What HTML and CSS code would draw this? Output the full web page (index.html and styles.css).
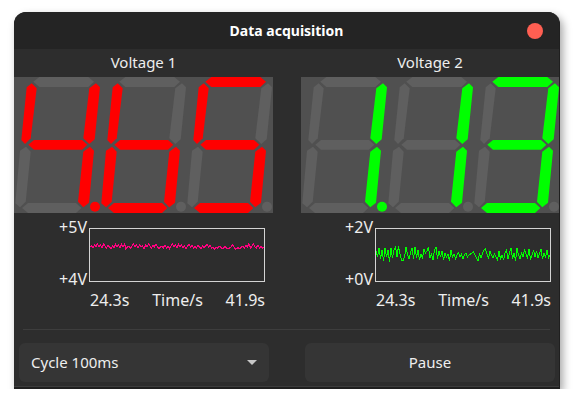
FILE: index.html
```html
<!DOCTYPE html>
<html>
  <head>
    <title>Data acquisition</title>
    <link rel="stylesheet" href="styles.css">
  </head>
  <body>
    <svg class="defs" width="0" height="0">
      <defs>
        <polygon id="segTop" points="19.3,4.7 25.3,0 74.3,0 80,4.7 74.3,10 25.3,10"/>
        <polygon id="segMid" points="14.3,67.8 20,63 68,63 73.3,67.8 68,72.7 20,72.7"/>
        <polygon id="segBot" points="8,131 14,126 62,126 67.3,131 62,136 14,136"/>
        <polygon id="segUL" points="17.7,6.3 22.7,11.3 16.7,61.3 11,67 7.3,63 12.7,10.3"/>
        <polygon id="segUR" points="82,6.3 86,10.3 80.7,62.3 75.3,67 69.3,61.3 75.3,11.3"/>
        <polygon id="segLL" points="12,69.7 16.7,74.7 11.7,124.7 6,130.3 1.3,126.3 6,73.7"/>
        <polygon id="segLR" points="76,69.7 80,73.7 75,125.7 69.3,130.3 64,124.7 69.3,74.7"/>
        <circle id="segDot" cx="81" cy="129.7" r="5"/>
      </defs>
    </svg>
    <div class="window">
      <div class="titlebar">
        <span></span>
        <div class="title">Data acquisition</div>
        <div class="close"></div>
      </div>
      <div class="meters">
        <div class="meter">
          <div class="meter-label">Voltage 1</div>
          <svg class="lcd red" width="259" height="136" viewBox="0 0 259 136">
            <g>
              <use href="#segTop"/><use href="#segBot"/><use href="#segLL"/>
              <use class="on" href="#segUL"/><use class="on" href="#segUR"/><use class="on" href="#segMid"/><use class="on" href="#segLR"/><use class="on" href="#segDot"/>
            </g>
            <g transform="translate(86 0)">
              <use href="#segTop"/><use href="#segUR"/><use href="#segDot"/>
              <use class="on" href="#segUL"/><use class="on" href="#segMid"/><use class="on" href="#segLL"/><use class="on" href="#segLR"/><use class="on" href="#segBot"/>
            </g>
            <g transform="translate(172 0)">
              <use href="#segUR"/><use href="#segLL"/><use href="#segDot"/>
              <use class="on" href="#segTop"/><use class="on" href="#segUL"/><use class="on" href="#segMid"/><use class="on" href="#segLR"/><use class="on" href="#segBot"/>
            </g>
          </svg>
          <div class="chart">
            <div class="y-labels"><span>+5V</span><span>+4V</span></div>
            <svg class="plot" width="174" height="52" viewBox="1 1 174 52">
              <polyline class="trace-red" points="1,19 2.5,18 4,20 5.5,17 7,19 8.5,16 10,19 11.5,17 13,20 14.5,16 16,18 17.5,20 19,17 20.5,19 22,21 23.5,18 25,20 26.5,16 28,19 29.5,17 31,20 32.5,16 34,19 35.5,16 37,21 38.5,19 40,18 41.5,20 43,18 44.5,16 46,19 47.5,17 49,20 50.5,17 52,19 53.5,18 55,21 56.5,17 58,19 59.5,16 61,18 62.5,20 64,17 65.5,19 67,16 68.5,19 70,21 71.5,19 73,18 74.5,20 76,17 77.5,20 79,18 80.5,21 82,18 83.5,16 85,19 86.5,17 88,20 89.5,16 91,19 92.5,17 94,20 95.5,18 97,21 98.5,18 100,16 101.5,19 103,17 104.5,20 106,18 107.5,20 109,17 110.5,19 112,21 113.5,18 115,20 116.5,18 118,16 119.5,19 121,17 122.5,20 124,19 125.5,21 127,19 128.5,20 130,18 131.5,19 133,21 134.5,20 136,18 137.5,20 139,21 140.5,20 142,19 143.5,17 145,19 146.5,21 148,20 149.5,20 151,21 152.5,19 154,18 155.5,20 157,17 158.5,19 160,16 161.5,20 163,18 164.5,16 166,19 167.5,20 169,17 170.5,20 172,18 173.5,20 175,19"/>
            </svg>
            <div class="x-labels"><span>24.3s</span><span>Time/s</span><span>41.9s</span></div>
          </div>
        </div>
        <div class="meter">
          <div class="meter-label">Voltage 2</div>
          <svg class="lcd green" width="259" height="136" viewBox="0 0 259 136">
            <g>
              <use href="#segTop"/><use href="#segBot"/><use href="#segUL"/><use href="#segLL"/><use href="#segMid"/>
              <use class="on" href="#segUR"/><use class="on" href="#segLR"/><use class="on" href="#segDot"/>
            </g>
            <g transform="translate(86 0)">
              <use href="#segTop"/><use href="#segBot"/><use href="#segUL"/><use href="#segLL"/><use href="#segMid"/><use href="#segDot"/>
              <use class="on" href="#segUR"/><use class="on" href="#segLR"/>
            </g>
            <g transform="translate(172 0)">
              <use href="#segUL"/><use href="#segLL"/><use href="#segDot"/>
              <use class="on" href="#segTop"/><use class="on" href="#segUR"/><use class="on" href="#segMid"/><use class="on" href="#segLR"/><use class="on" href="#segBot"/>
            </g>
          </svg>
          <div class="chart chart-right">
            <div class="y-labels"><span>+2V</span><span>+0V</span></div>
            <svg class="plot" width="174" height="52" viewBox="1 1 174 52">
              <polyline class="trace-green" points="1,23 2.5,29 4,20 5.5,31 7,22 8.5,33 10,20 11.5,29 13,22 14.5,34 16,20 17.5,30 19,22 20.5,19 22,29 23.5,18 25,26 26.5,32 28,33 29.5,29 31,19 32.5,26 34,31 35.5,25 37,20 38.5,31 40,19 41.5,30 43,22 44.5,32 46,26 47.5,30 49,21 50.5,25 52,23 53.5,19 55,30 56.5,26 58,32 59.5,22 61,19 62.5,31 64,23 65.5,29 67,23 68.5,32 70,25 71.5,29 73,26 74.5,33 76,22 77.5,29 79,26 80.5,31 82,27 83.5,25 85,29 86.5,26 88,31 89.5,27 91,25 92.5,29 94,27 95.5,26 97,25 98.5,24 100,27 101.5,30 103,33 104.5,26 106,30 107.5,25 109,22 110.5,21 112,26 113.5,31 115,23 116.5,27 118,30 119.5,26 121,29 122.5,32 124,23 125.5,31 127,27 128.5,32 130,25 131.5,22 133,31 134.5,25 136,20 137.5,31 139,25 140.5,33 142,20 143.5,27 145,31 146.5,25 148,29 149.5,22 151,26 152.5,30 154,21 155.5,32 157,27 158.5,22 160,29 161.5,23 163,30 164.5,26 166,21 167.5,31 169,25 170.5,29 172,22 173.5,30 175,27"/>
            </svg>
            <div class="x-labels"><span>24.3s</span><span>Time/s</span><span>41.9s</span></div>
          </div>
        </div>
      </div>
      <div class="separator"></div>
      <div class="controls">
        <div class="control dropdown">
          <span>Cycle 100ms</span>
          <span class="arrow"></span>
        </div>
        <div class="control button">Pause</div>
      </div>
    </div>
  </body>
</html>
```
FILE: styles.css
```css
body {
  margin: 0;
  background: #ffffff;
  font-family: "Noto Sans", sans-serif;
  color: #eeeeee;
}
.defs {
  display: block;
}
.window {
  width: 545px;
  height: 375px;
  margin: 12px 0 0 14px;
  background: #2d2d2d;
  border-right: 1px solid #1f1f1f;
  border-bottom: 2px solid #1f1f1f;
  border-radius: 12px 12px 0 0;
  box-shadow: 3px 4px 8px rgba(0, 0, 0, 0.35);
  overflow: hidden;
}
.titlebar {
  display: grid;
  grid-template-columns: 1fr auto 1fr;
  align-items: center;
  height: 37px;
  background: #242424;
}
.title {
  font-size: 14px;
  font-weight: bold;
  color: #ffffff;
}
.close {
  justify-self: end;
  width: 16px;
  height: 16px;
  margin-right: 16px;
  border-radius: 50%;
  background: #ff5f52;
}
.meters {
  display: grid;
  grid-template-columns: 259px 258px;
  column-gap: 28px;
}
.meter-label {
  height: 27px;
  padding-bottom: 1px;
  line-height: 27px;
  text-align: center;
  font-size: 15px;
}
.lcd {
  display: block;
  background: #505050;
}
.lcd use {
  fill: #5f5f5f;
}
.lcd.red use.on {
  fill: #ff0000;
}
.lcd.green use.on {
  fill: #00ff00;
}
.chart {
  display: grid;
  grid-template-columns: 75px 176px;
  margin-top: 15px;
  font-size: 16px;
}
.chart-right {
  margin-left: -1px;
}
.y-labels {
  display: flex;
  flex-direction: column;
  justify-content: space-between;
  height: 72px;
  margin: -11px 0 -7px;
  padding-right: 2px;
  line-height: 20px;
  text-align: right;
}
.plot {
  display: block;
  background: #2d2d2d;
  border: 1px solid #d4d4d4;
  shape-rendering: crispEdges;
}
.plot polyline {
  fill: none;
}
.trace-red {
  stroke: #ff0080;
  stroke-width: 1.3;
}
.trace-green {
  stroke: #00ff00;
  stroke-width: 1;
}
.x-labels {
  grid-column: 2;
  display: flex;
  justify-content: space-between;
  margin: 8px 0 0 1px;
  line-height: 20px;
}
.separator {
  height: 1px;
  margin: 19px 9px 0;
  background: #3d3d3d;
}
.controls {
  display: grid;
  grid-template-columns: 250px 250px;
  column-gap: 36px;
  margin-top: 13px;
  padding: 0 0 4px 5px;
  border-bottom: 1px solid #3d3d3d;
}
.control {
  height: 39px;
  border-radius: 6px;
  background: #353535;
  font-size: 15px;
  line-height: 39px;
}
.dropdown {
  display: flex;
  justify-content: space-between;
  align-items: center;
  padding: 0 12px;
}
.arrow {
  width: 0;
  height: 0;
  border-left: 5px solid transparent;
  border-right: 5px solid transparent;
  border-top: 5px solid #c8c8c8;
}
.button {
  text-align: center;
}
```
